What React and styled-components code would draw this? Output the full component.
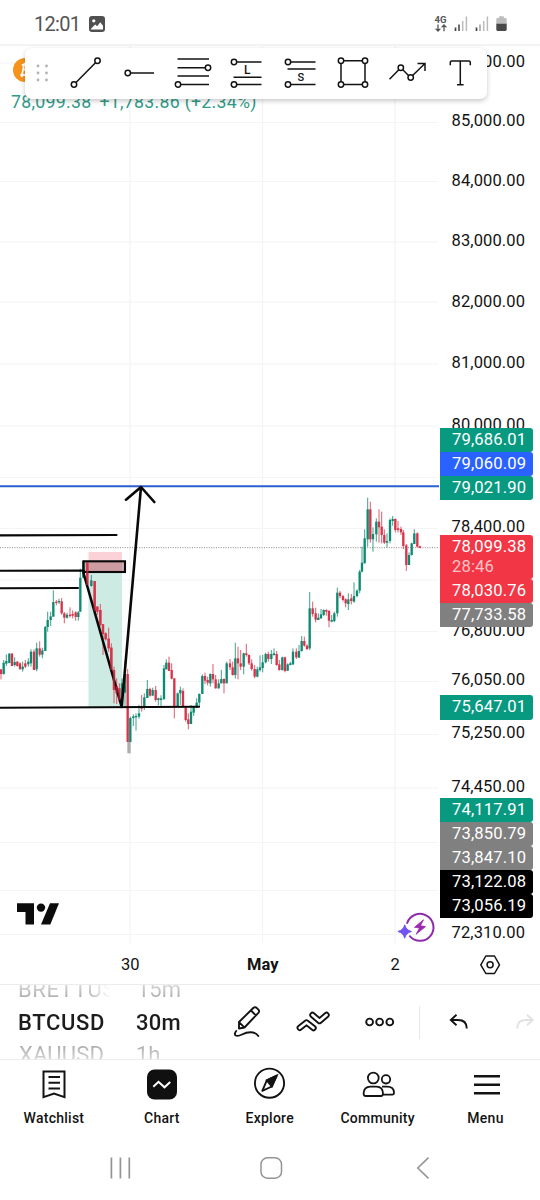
import styled, { createGlobalStyle } from 'styled-components';

const GlobalStyle = createGlobalStyle`
  body {
    margin: 0;
    background-color: #fff;
    font-family: Roboto, "Liberation Sans", sans-serif;
    color: #131313;
  }
  svg {
    display: block;
    overflow: visible;
  }
`

const Screen = styled.div`
  display: flex;
  flex-direction: column;
  width: 540px;
  height: 1200px;
  overflow: hidden;
  background-color: #fff;
`

const StatusBar = styled.div`
  display: flex;
  align-items: center;
  justify-content: space-between;
  height: 46px;
  padding: 3px 33px 0 34px;
  box-sizing: border-box;
  border-bottom: 2px solid #f3f3f3;
`

const StatusGroup = styled.div`
  display: flex;
  align-items: center;
  gap: ${props => props.$gap}px;
`

const Clock = styled.div`
  width: 46px;
  font-size: 20px;
  letter-spacing: -0.7px;
  color: #555;
`

const Network = styled.div`
  display: flex;
  flex-direction: column;
  align-items: center;
  width: 13px;
  font-size: 9.5px;
  line-height: 9px;
  font-weight: 700;
  color: #555;
`

const ChartArea = styled.div`
  position: relative;
  display: flex;
  height: 897px;
`

const Plot = styled.div`
  width: 439.5px;
`

const PriceAxis = styled.div`
  position: relative;
  display: flex;
  flex-direction: column;
  flex: 1;
`

const PriceLabel = styled.div`
  height: 20px;
  line-height: 20px;
  margin-top: ${props => props.$gap}px;
  padding-left: 12px;
  font-size: 16.5px;
  letter-spacing: 0.12px;
`

const TagLayer = styled.div`
  position: absolute;
  top: 0;
  left: 0;
  width: 93px;
`

const PriceTag = styled.div`
  height: ${props => props.$height || 24}px;
  margin-top: ${props => props.$gap || 0}px;
  padding: 1px 0 0 12.5px;
  box-sizing: border-box;
  background-color: ${props => props.$color};
  border-radius: 0 3px 3px 0;
  color: #fff;
  font-size: 16.6px;
  letter-spacing: 0.15px;
  line-height: 22px;
`

const Countdown = styled.div`
  line-height: 18px;
  color: #ffc4c8;
`

const SymbolCoin = styled.div`
  position: absolute;
  top: 12px;
  left: 13px;
`

const LastPrice = styled.div`
  position: absolute;
  top: 45px;
  left: 11px;
  display: flex;
  gap: 8px;
  font-size: 17.7px;
  letter-spacing: 0.3px;
  line-height: 22px;
  color: #2f9c88;
`

const DrawingBar = styled.div`
  position: absolute;
  top: 2px;
  left: 25px;
  display: flex;
  align-items: center;
  width: 462px;
  height: 51px;
  padding: 0 0 2px 11px;
  box-sizing: border-box;
  border-radius: 7px;
  background-color: #fff;
  box-shadow: 0 2px 5px rgba(0, 0, 0, 0.22);
`

const Tools = styled.div`
  display: flex;
  gap: 17.45px;
  margin-left: 19px;
`

const Logo = styled.div`
  position: absolute;
  top: 857px;
  left: 17px;
`

const Boost = styled.div`
  position: absolute;
  top: 863px;
  left: 397px;
`

const TimeAxis = styled.div`
  display: flex;
  align-items: center;
  height: 41px;
  padding-left: 64px;
  box-sizing: border-box;
  font-size: 16.5px;
  padding-top: 2px;
`

const TimeLabel = styled.div`
  width: 132.5px;
  text-align: center;
  font-weight: ${props => props.$bold ? 700 : 400};
`

const SettingsButton = styled.div`
  margin-left: 18px;
`

const ControlBar = styled.div`
  display: flex;
  align-items: center;
  height: 76px;
  box-sizing: border-box;
  border-top: 1.5px solid #ececec;
  border-bottom: 1.5px solid #ececec;
`

const Wheel = styled.div`
  display: flex;
  flex-direction: column;
  justify-content: center;
  width: ${props => props.$width}px;
  height: 74px;
  margin-left: ${props => props.$left}px;
  overflow: hidden;
`

const WheelItem = styled.div`
  flex-shrink: 0;
  height: 32.5px;
  line-height: 33px;
  padding-left: ${props => props.$indent || 0}px;
  white-space: nowrap;
  font-size: 22px;
  letter-spacing: ${props => props.$spacing || 0}px;
  font-weight: ${props => props.$active ? 500 : 400};
  color: transparent;
  background: ${props => props.$active ? '#1c1c1c' : `linear-gradient(${props.$fade}, #ececec 15%, #a8a8a8 80%)`};
  background-clip: text;
  -webkit-background-clip: text;
  mask-image: ${props => props.$cut ? 'linear-gradient(90deg, #000 75%, transparent)' : 'none'};
`

const Actions = styled.div`
  display: flex;
  align-items: center;
`

const Action = styled.div`
  margin-left: ${props => props.$left}px;
`

const Divider = styled.div`
  width: 1px;
  height: 33px;
  margin-left: 25px;
  background-color: #e8e8e8;
`

const TabBar = styled.div`
  display: flex;
  height: 76px;
`

const Tab = styled.div`
  display: flex;
  flex-direction: column;
  align-items: center;
  width: 107.9px;
  padding-top: 7px;
  font-size: 14px;
  font-weight: 500;
  letter-spacing: 0.25px;
  line-height: 18px;
  box-sizing: border-box;
`

const TabIcon = styled.div`
  height: 42px;
`

const SystemBar = styled.div`
  display: flex;
  align-items: center;
  gap: 128px;
  height: 64px;
  padding-left: 109px;
  box-sizing: border-box;
`

const INK = '#131313';
const UP = '#0f8a72';
const DOWN = '#d8334a';

// x, open, close, high, low
const candles = [
  [3,598,612,598,628],[11,612,578,570,614],[19,581,573,553,588],[28,579,551,549,580],[36,551,588,549,588],[44,585,576,562,590],
  [52,575,588,573,590],[60,580,597,577,600],[68,598,590,575,605],[76,580,590,570,594],[85,583,575,565,590],[93,580,545,538,590],
  [102,545,600,538,600],[110,598,535,518,604],[119,535,554,514,560],[127,554,541,533,565],[136,543,471,468,543],[143,471,450,425,485],
  [152,450,439,425,468],[160,440,396,361,440],[169,395,399,390,406],[177,397,393,386,402],[185,394,430,384,434],[193,430,443,426,460],
  [201,443,434,428,446],[210,434,437,412,443],[218,432,437,421,445],[227,427,441,424,452],[235,441,427,423,452],[241,425,323,296,425],
  [250,323,273,271,325],[262,278,345,276,350],[274,348,331,315,350],[284,333,422,333,425],[292,410,425,408,435],[301,420,465,402,470],
  [309,463,492,462,555],[317,490,508,487,512],[326,506,535,473,545],[334,533,600,520,600],[342,600,660,590,700],[350,648,670,625,702],
  [358,655,690,640,697],[366,712,640,625,712],[375,668,612,572,712],[383,612,816,597,816],[391,816,744,740,816],[400,744,739,733,768],
  [408,741,738,730,782],[417,740,730,704,746],[425,708,716,675,725],[433,712,682,670,720],[442,684,657,630,684],[450,657,677,653,680],
  [458,677,660,653,677],[467,660,690,648,695],[475,690,685,683,706],[483,690,685,676,712],[492,688,595,585,688],[499,598,578,568,598],
  [507,578,603,560,603],[515,600,626,580,628],[523,625,712,625,745],[533,708,670,668,710],[541,670,660,650,705],[549,663,710,655,710],
  [557,712,750,708,755],[565,748,762,730,778],[573,762,725,705,762],[581,728,710,708,738],[590,712,698,685,715],[598,698,672,670,712],
  [607,672,618,613,672],[615,618,632,608,642],[623,630,638,620,646],[631,640,612,610,650],[639,612,628,582,640],[647,628,655,615,656],
  [656,655,640,628,656],[664,640,627,600,640],[672,627,640,625,670],[680,640,580,575,640],[690,580,592,567,600],[698,592,615,575,617],
  [706,615,565,518,626],[714,565,580,530,628],[722,580,590,540,600],[731,590,550,548,613],[739,550,555,521,560],[747,555,580,553,585],
  [755,580,597,568,602],[764,597,620,585,625],[772,620,598,590,622],[780,600,592,556,605],[788,594,577,555,607],[797,577,552,548,580],
  [805,552,567,545,575],[814,567,552,540,582],[822,555,550,535,557],[830,552,585,543,587],[838,583,600,570,602],[847,600,562,560,602],
  [855,562,603,560,607],[863,602,583,580,603],[871,585,580,575,586],[879,583,545,535,585],[889,545,562,535,567],[897,563,543,525,563],
  [905,543,513,498,545],[913,513,527,500,530],[921,527,537,523,540],[929,535,415,366,540],[938,415,432,395,440],[947,430,449,413,457],
  [955,450,443,430,450],[963,445,433,417,446],[971,435,420,418,438],[979,420,425,418,437],[987,423,452,420,472],[995,455,450,435,457],
  [1003,453,430,425,457],[1012,430,368,353,440],[1020,368,378,363,385],[1029,378,390,375,395],[1037,388,400,385,412],[1045,402,388,370,420],
  [1054,385,393,372,403],[1062,395,378,337,398],[1071,378,362,358,382],[1079,362,305,300,370],[1086,305,278,230,307],[1094,280,205,178,280],
  [1103,208,118,83,230],[1111,118,208,95,218],[1119,208,192,172,245],[1129,193,155,145,215],[1137,155,172,118,218],[1145,170,195,125,220],
  [1153,195,218,178,222],[1161,218,213,190,232],[1170,213,150,145,220],[1178,153,147,138,167],[1186,147,180,145,187],[1194,175,180,153,187],
  [1203,177,187,170,195],[1210,187,228,180,237],[1219,226,285,222,303],[1227,285,255,247,285],[1235,255,220,218,257],[1243,222,190,178,222],
  [1252,190,230,187,232],[1260,229,234,227,234]
]

const gridRows = [63, 122.5, 181.5, 242, 302, 364, 426, 477.5, 528.5, 580, 631.5, 681.5, 734.5, 788, 842.5, 890.5, 934.5]
const gridColumns = [130, 262.5, 395]

const priceLabels = [
  {text:'86,000.00', gap:6},
  {text:'85,000.00', gap:39},
  {text:'84,000.00', gap:40},
  {text:'83,000.00', gap:40},
  {text:'82,000.00', gap:41},
  {text:'81,000.00', gap:41},
  {text:'80,000.00', gap:42},
  {text:'78,400.00', gap:82},
  {text:'76,800.00', gap:84},
  {text:'76,050.00', gap:29},
  {text:'75,250.00', gap:33},
  {text:'74,450.00', gap:34},
  {text:'72,310.00', gap:126}
]

const priceTags = [
  {text:'79,686.01', color:'#089981', gap:382},
  {text:'79,060.09', color:'#2962ff'},
  {text:'79,021.90', color:'#089981'},
  {text:'78,099.38', color:'#f23645', gap:35, height:44, time:'28:46'},
  {text:'78,030.76', color:'#f23645'},
  {text:'77,733.58', color:'#808080'},
  {text:'75,647.01', color:'#089981', gap:68, height:25},
  {text:'74,117.91', color:'#089981', gap:78},
  {text:'73,850.79', color:'#808080'},
  {text:'73,847.10', color:'#808080'},
  {text:'73,122.08', color:'#000'},
  {text:'73,056.19', color:'#000'}
]

function Knob({ x, y }) {
  return <circle cx={x} cy={y} r="2.7" fill="#fff" />
}

const tools = [
  <><path d="M6 29.5L29.5 5.8" /><Knob x={6} y={29.5} /><Knob x={29.5} y={5.8} /></>,
  <><path d="M7 18H33" /><Knob x={6.8} y={18} /></>,
  <><path d="M2.5 4H34M2.5 12.8H33M2.5 21H34M3 29.5H34" /><Knob x={33} y={12.8} /><Knob x={3} y={29.5} /></>,
  <>
    <path d="M6 7H33.5M5.5 22.2H33.5M6 29.5H33.5" /><Knob x={6} y={7} /><Knob x={6} y={29.5} />
    <text x="16" y="19" fontSize="12" fontWeight="500" fill={INK} stroke="none">L</text>
  </>,
  <>
    <path d="M6 7H33.5M5.5 14H33.5M6 29.5H33.5" /><Knob x={6} y={7} /><Knob x={6} y={29.5} />
    <text x="15.5" y="26" fontSize="11" fontWeight="500" fill={INK} stroke="none">S</text>
  </>,
  <><path d="M6 5.7H30V29.5H6Z" /><Knob x={6} y={5.7} /><Knob x={30} y={5.7} /><Knob x={6} y={29.5} /><Knob x={30} y={29.5} /></>,
  <><path d="M.5 24.2L11.8 12.8L21.5 22.5L36 8.5M28.5 8.5H36V16" /><Knob x={11.8} y={12.8} /><Knob x={21.7} y={22.5} /></>,
  <path d="M8.3 10.2V7.4Q8.3 6 9.7 6H26.9Q28.3 6 28.3 7.4V10.2M18.3 6V29.7M15 29.7H21.6" />
]

function Chart() {
  return (
    <svg width="439" height="897" viewBox="0 46 439 897">
      <g stroke="#f4f4f4" strokeWidth="1.2">
        {gridRows.map(y => <path key={y} d={`M0 ${y}H438`} />)}
        {gridColumns.map(x => <path key={x} d={`M${x} 46V943`} />)}
      </g>
      {/* short position */}
      <rect x="88.5" y="552" width="33.5" height="20" fill="#fbd2d8" />
      <rect x="88.5" y="572" width="33.5" height="135" fill="#cdeae3" />
      <path d="M0 547.7H439" stroke="#8c8080" strokeWidth="1" strokeDasharray="1 1.4" />
      <rect x="83.5" y="561.3" width="41.5" height="10.7" fill="#a66f77" fillOpacity="0.55" />
      <g transform="translate(0 470) scale(0.33333)">
        <rect x="382" y="816" width="10" height="34" fill="#adadad" />
        {candles.map(([x, open, close, high, low]) => (
          <g key={x} fill={close > open ? DOWN : UP}>
            <rect x={x - 1.6} y={high} width="3.2" height={low - high} opacity="0.75" />
            <rect x={x - 3.5} y={Math.min(open, close)} width="7" height={Math.max(4, Math.abs(close - open))} />
          </g>
        ))}
      </g>
      <g fill="none" stroke="#080808" strokeWidth="2.1" strokeLinecap="round">
        <rect x="83.5" y="561.3" width="41.5" height="10.7" />
        <path d="M0 535.4L116.5 535M0 570.8L84 570.6M0 588.3L78 588M0 707.7L199 706.7" />
      </g>
      <path d="M0 486.3H439" stroke="#2a60cf" strokeWidth="2.1" />
      <path d="M83.5 573L121.7 707L141 487M126 499.7L141 487L154.3 502" fill="none" stroke="#080808" strokeWidth="2.6" strokeLinecap="round" strokeLinejoin="round" />
      {/* candles of the drop stay in front of the trend arrow */}
      <g transform="translate(0 470) scale(0.33333)" fill={DOWN}>
        {candles.slice(31, 43).filter(c => c[2] > c[1]).map(([x, open, close]) => (
          <rect key={x} x={x - 3.5} y={open} width="7" height={close - open} opacity="0.6" />
        ))}
      </g>
    </svg>
  )
}

function Signal({ strong }) {
  return (
    <svg width="14" height="16">
      <path d="M1.5 11.5V15" stroke="#444" strokeWidth="1.7" />
      <path d="M5 8.5V15" stroke={strong ? '#555' : '#aaa'} strokeWidth="1.7" />
      <path d="M8.7 5V15M12.4 .5V15" stroke="#bbb" strokeWidth="1.5" />
    </svg>
  )
}

function App() {
  return (
    <Screen>
      <GlobalStyle />
      <StatusBar>
        <StatusGroup $gap={9}>
          <Clock>12:01</Clock>
          <svg width="16" height="16">
            <rect x="0" y="0" width="16" height="16" rx="3" fill="#505050" />
            <circle cx="4.8" cy="4.8" r="1.6" fill="#fff" />
            <path d="M2 12.8L6.2 8.5L8.2 10.3L11.2 6.2L14 9.7V13.5H2Z" fill="#fff" />
          </svg>
        </StatusGroup>
        <StatusGroup $gap={7}>
          <Network>
            4G
            <svg width="12" height="8" fill="none" stroke="#555" strokeWidth="1.3">
              <path d="M3 .5V7M.6 4.6L3 7L5.4 4.6M9 7.3V1M6.6 3.4L9 1L11.4 3.4" />
            </svg>
          </Network>
          <Signal strong />
          <Signal />
          <svg width="11" height="16">
            <path d="M3.2 .3H7.8V2H9.3Q10.7 2 10.7 3.4V8H.3V3.4Q.3 2 1.7 2H3.2Z" fill="#bdbdbd" />
            <path d="M.3 7.7H10.7V13.6Q10.7 15 9.3 15H1.7Q.3 15 .3 13.6Z" fill="#484848" />
          </svg>
        </StatusGroup>
      </StatusBar>

      <ChartArea>
        <Plot><Chart /></Plot>
        <PriceAxis>
          {priceLabels.map(e => <PriceLabel key={e.text} $gap={e.gap}>{e.text}</PriceLabel>)}
          <TagLayer>
            {
              priceTags.map(e => (
                <PriceTag key={e.text} $color={e.color} $gap={e.gap} $height={e.height}>
                  {e.text}
                  {e.time && <Countdown>{e.time}</Countdown>}
                </PriceTag>
              ))
            }
          </TagLayer>
        </PriceAxis>
        <SymbolCoin>
          <svg width="24" height="24">
            <circle cx="12" cy="12" r="12" fill="#f7931a" />
            <path d="M8.8 7H13Q16 7 15.5 9.2Q15 11.5 12 11.5H9.5M12.5 11.5Q16 12 15.5 14.3Q15 17 11 17H7.4M11 7L9 17M11.6 4.8L11.1 7M9.2 17L8.8 19.2" fill="none" stroke="#fff" strokeWidth="1.8" />
          </svg>
        </SymbolCoin>
        <LastPrice>
          <div>78,099.38</div>
          <div>+1,783.86 (+2.34%)</div>
        </LastPrice>
        <DrawingBar>
          <svg width="13" height="18" fill="#b3b3b3">
            {[2, 9, 16].map(y => <g key={y}><circle cx="2" cy={y} r="1.4" /><circle cx="10.5" cy={y} r="1.4" /></g>)}
          </svg>
          <Tools>
            {
              tools.map((icon, i) => (
                <svg key={i} width="36" height="36" fill="none" stroke={INK} strokeWidth="1.5">{icon}</svg>
              ))
            }
          </Tools>
        </DrawingBar>
        <Logo>
          <svg width="42" height="22" fill="#0c0c0c">
            <path d="M0 .3H17V21.5H8.5V9H0Z" />
            <circle cx="24" cy="4.6" r="4.2" />
            <path d="M33 .3H42L33.3 21.5H24Z" />
          </svg>
        </Logo>
        <Boost>
          <svg width="38" height="34">
            <path d="M10.2 14A13.5 13.5 0 1 1 12.8 27.2" fill="none" stroke="#8e2cab" strokeWidth="2" strokeLinecap="round" />
            <path d="M26.5 10.8L17.5 18.3L22.5 19L19.2 25.2L28.5 17.6L23.4 16.8Z" fill="#9c27b0" stroke="#9c27b0" strokeWidth=".8" strokeLinejoin="round" />
            <path d="M7.7 15.8Q9 21.2 14.5 22.5Q9 23.8 7.7 29.2Q6.4 23.8 .9 22.5Q6.4 21.2 7.7 15.8Z" fill="#7352f2" stroke="#7352f2" strokeWidth="1" strokeLinejoin="round" />
          </svg>
        </Boost>
      </ChartArea>

      <TimeAxis>
        <TimeLabel>30</TimeLabel>
        <TimeLabel $bold>May</TimeLabel>
        <TimeLabel>2</TimeLabel>
        <SettingsButton>
          <svg width="22" height="20" fill="none" stroke={INK} strokeWidth="1.5">
            <path d="M5.8 1H14.5L19.5 9.8L14.5 18.5H5.8L.8 9.8Z" strokeLinejoin="round" />
            <circle cx="10.1" cy="9.8" r="3" />
          </svg>
        </SettingsButton>
      </TimeAxis>

      <ControlBar>
        <Wheel $left={18} $width={93}>
          <WheelItem $fade="180deg" $cut $spacing={0.6}>BRETTUSD</WheelItem>
          <WheelItem $active $spacing={0.65}>BTCUSD</WheelItem>
          <WheelItem $fade="0deg" $indent={1} $spacing={0.2}>XAUUSD</WheelItem>
        </Wheel>
        <Wheel $left={25} $width={60}>
          <WheelItem $fade="180deg" $indent={1}>15m</WheelItem>
          <WheelItem $active $spacing={0.3}>30m</WheelItem>
          <WheelItem $fade="0deg">1h</WheelItem>
        </Wheel>
        <Actions>
          <Action $left={37}>
            <svg width="29" height="34" viewBox="233 1005 29 34" fill="none" stroke={INK} strokeWidth="1.9" strokeLinejoin="round" strokeLinecap="round">
              <path d="M239 1022L253.5 1007.8Q255 1006.5 256.6 1007.8L258.4 1009.6Q259.8 1011.2 258.4 1012.8L244.5 1027.5L239 1028.5ZM251 1010.5L255.8 1015.3M239.3 1022.3L244.3 1027.3" />
              <path d="M236.2 1031Q233.8 1034 235.7 1035.5Q238 1036.6 242 1034.5Q248 1031.5 253 1032.5Q256.5 1033.2 258.3 1036" />
            </svg>
          </Action>
          <Action $left={34}>
            <svg width="36" height="34" viewBox="296 1005 36 34" fill="none" strokeLinejoin="round" strokeLinecap="round">
              <g stroke={INK} strokeWidth="6.4"><path d="M299.8 1027.8L306.5 1022.5L313.5 1028" /><path d="M312.5 1015L319.5 1021L326.5 1015" /></g>
              <g stroke="#fff" strokeWidth="2.7"><path d="M299.8 1027.8L306.5 1022.5L313.5 1028" /><path d="M312.5 1015L319.5 1021L326.5 1015" /></g>
            </svg>
          </Action>
          <Action $left={33}>
            <svg width="29" height="10" fill="none" stroke={INK} strokeWidth="1.9">
              <circle cx="4.6" cy="5" r="3.4" /><circle cx="14.6" cy="5" r="3.4" /><circle cx="24.8" cy="5" r="3.4" />
            </svg>
          </Action>
          <Divider />
          <Action $left={28.5}>
            <svg width="20" height="16" fill="none" stroke={INK} strokeWidth="1.9">
              <path d="M7.5 .8L1.8 6L7.5 11.2M2 6H9Q17.8 6 17.8 14.5" />
            </svg>
          </Action>
          <Action $left={47.5}>
            <svg width="20" height="16" fill="none" stroke="#e2e2e2" strokeWidth="1.9">
              <path d="M11 .8L16.7 6L11 11.2M16.5 6H10Q1.2 6 1.2 14.5" />
            </svg>
          </Action>
        </Actions>
      </ControlBar>

      <TabBar>
        <Tab>
          <TabIcon>
            <svg width="32" height="34" fill="none" stroke={INK} strokeWidth="2">
              <path d="M5.5 4.5H26.5V30.2L16 26.6L5.5 30.2ZM10.5 10H22M10.5 15.7H22M10.5 21.5H22" />
            </svg>
          </TabIcon>
          Watchlist
        </Tab>
        <Tab>
          <TabIcon>
            <svg width="32" height="34" fill="none">
              <rect x="1" y="2.5" width="30" height="30" rx="7.5" fill="#101010" />
              <path d="M7.3 19.8L12.5 14.8L18.5 20.3L24.2 15" stroke="#fff" strokeWidth="2" />
            </svg>
          </TabIcon>
          Chart
        </Tab>
        <Tab>
          <TabIcon>
            <svg width="32" height="34" fill="none" stroke={INK} strokeWidth="1.9">
              <circle cx="15.5" cy="16.2" r="14.6" />
              <path d="M22.7 8.7L17.8 19.5L8.3 23.8L12.8 13.3Z" strokeLinejoin="round" />
              <path d="M22.7 8.7L17.8 19.5L12.8 13.3Z" fill={INK} />
            </svg>
          </TabIcon>
          Explore
        </Tab>
        <Tab>
          <TabIcon>
            <svg width="34" height="34" fill="none" stroke={INK} strokeWidth="1.8">
              <circle cx="12.3" cy="11" r="5.4" />
              <circle cx="25" cy="12.3" r="4.2" />
              <path d="M2.6 26.5Q2.8 19.6 9.5 19.6H15.5Q21.8 19.6 22 26.5Q22 29 20 29H4.7Q2.6 29 2.6 26.5ZM21 19.6H26Q33 19.6 33 25.8Q33 27.6 31.2 27.6H22" />
            </svg>
          </TabIcon>
          Community
        </Tab>
        <Tab>
          <TabIcon>
            <svg width="30" height="34" stroke={INK} strokeWidth="2.4">
              <path d="M3 9.2H29M3 17.7H29M3 26.2H29" />
            </svg>
          </TabIcon>
          Menu
        </Tab>
      </TabBar>

      <SystemBar>
        <svg width="23" height="22" stroke="#949494" strokeWidth="1.7"><path d="M2.4 .5V21.5M11.4 .5V21.5M20.3 .5V21.5" /></svg>
        <svg width="23" height="22"><rect x="1" y=".8" width="20.5" height="20.4" rx="6.5" fill="none" stroke="#949494" strokeWidth="1.5" /></svg>
        <svg width="23" height="22" fill="none" stroke="#949494" strokeWidth="1.6"><path d="M17.5 .7L6.8 11L17.5 21.3" /></svg>
      </SystemBar>
    </Screen>
  );
}

export default App;
